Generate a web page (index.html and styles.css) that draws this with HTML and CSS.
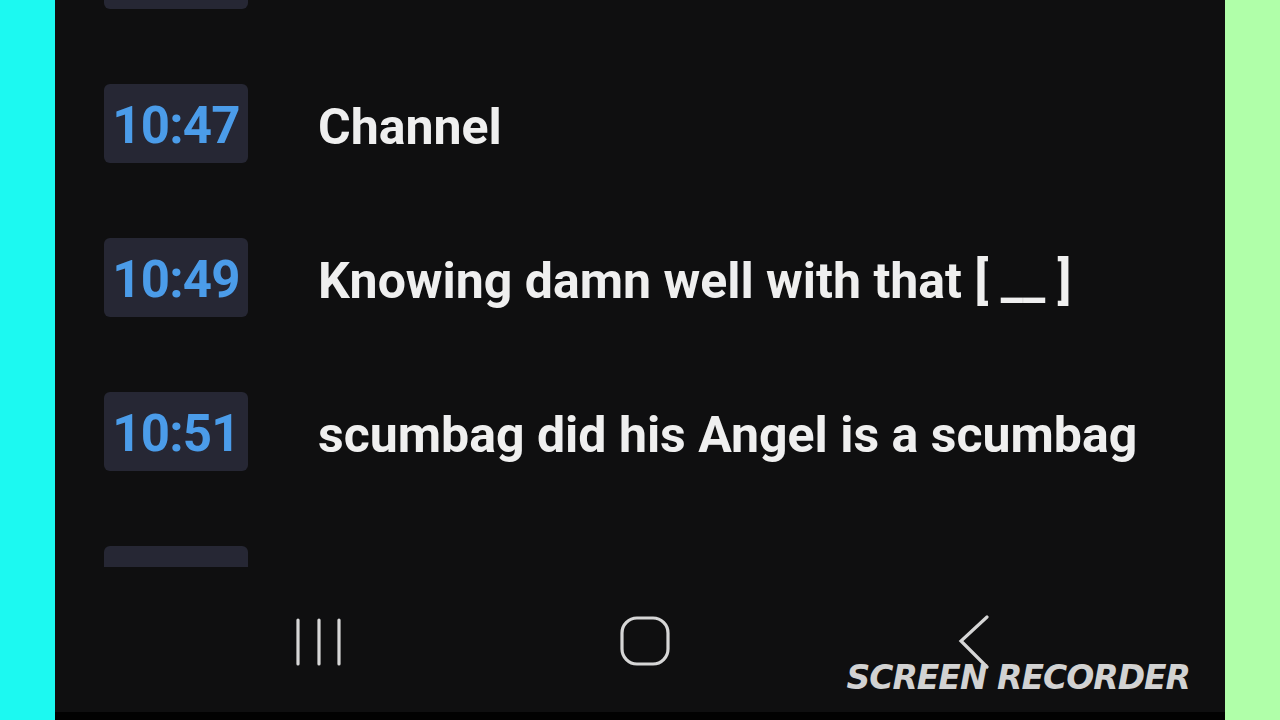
FILE: index.html
```html
<!DOCTYPE html>
<html lang="en">
<head>
  <meta charset="UTF-8">
  <title>Transcript</title>
  <link rel="stylesheet" href="styles.css">
</head>
<body>
  <div class="frame">
    <div class="side side-left"></div>

    <div class="phone">
      <div class="list">
        <div class="row partial-top">
          <div class="stamp"></div>
        </div>
        <div class="row">
          <div class="stamp">10:47</div>
          <div class="line">Channel</div>
        </div>
        <div class="row">
          <div class="stamp">10:49</div>
          <div class="line">Knowing damn well with that [ __ ]</div>
        </div>
        <div class="row">
          <div class="stamp">10:51</div>
          <div class="line">scumbag did his Angel is a scumbag</div>
        </div>
        <div class="row">
          <div class="stamp"></div>
        </div>
      </div>

      <div class="navbar">
        <svg class="nav-recents" width="48" height="48" viewBox="0 0 48 48">
          <path d="M3 2v44M24 2v44M44 2v44" stroke="#d6d6d6" stroke-width="3.2" stroke-linecap="round" fill="none"/>
        </svg>
        <svg class="nav-home" width="50" height="50" viewBox="0 0 50 50">
          <rect x="2" y="2" width="46" height="46" rx="15" stroke="#d6d6d6" stroke-width="3.2" fill="none"/>
        </svg>
        <svg class="nav-back" width="34" height="54" viewBox="0 0 34 54">
          <path d="M30 2L4 26L30 52" stroke="#d6d6d6" stroke-width="3.2" stroke-linecap="round" stroke-linejoin="miter" fill="none"/>
        </svg>
        <div class="watermark">SCREEN RECORDER</div>
      </div>

      <div class="bottom-edge"></div>
    </div>

    <div class="side side-right"></div>
  </div>
</body>
</html>
```

FILE: styles.css
```css
body {
  margin: 0;
  background: #0f0f10;
  font-family: Roboto, "Liberation Sans", Arial, sans-serif;
}
.frame {
  display: flex;
  width: 1280px;
  height: 720px;
  overflow: hidden;
}
.side {
  width: 55px;
  flex: none;
}
.side-left {
  background: #1cf9f1;
}
.side-right {
  background: #b0ffa9;
}
.phone {
  width: 1170px;
  display: flex;
  flex-direction: column;
  background: #0f0f10;
  position: relative;
}
.list {
  height: 567px;
  overflow: hidden;
  display: flex;
  flex-direction: column;
  gap: 75px;
  padding-left: 49px;
}
.partial-top {
  margin-top: -70px;
}
.row {
  display: flex;
  align-items: center;
  flex: none;
}
.stamp {
  width: 144px;
  height: 79px;
  box-sizing: border-box;
  background: #262734;
  border-radius: 6px;
  color: #4b9ce9;
  font-size: 51px;
  font-weight: 700;
  display: flex;
  align-items: center;
  justify-content: center;
  letter-spacing: -0.8px;
  padding-top: 4px;
}
.line {
  margin-left: 70px;
  color: #efefef;
  font-size: 50px;
  font-weight: 700;
  white-space: nowrap;
  padding-top: 6px;
}
.navbar {
  height: 145px;
  display: flex;
  align-items: flex-start;
  position: relative;
}
.nav-recents {
  margin-left: 240px;
  margin-top: 51px;
}
.nav-home {
  margin-left: 277px;
  margin-top: 49px;
}
.nav-back {
  margin-left: 287px;
  margin-top: 48px;
}
.watermark {
  position: absolute;
  right: 35px;
  top: 91px;
  color: #d2d2d2;
  font-family: "DejaVu Sans", "Liberation Sans", sans-serif;
  font-style: italic;
  font-weight: 700;
  font-size: 33px;
  letter-spacing: -1px;
}
.bottom-edge {
  height: 8px;
  background: #020202;
}
```
